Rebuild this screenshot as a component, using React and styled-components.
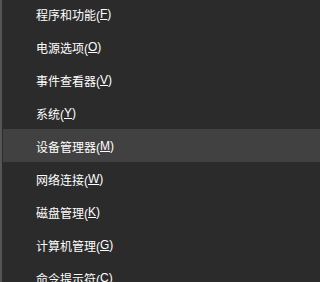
import React from 'react'
import styled, { createGlobalStyle } from 'styled-components'

const Global = createGlobalStyle`
  html, body {
    margin: 0;
    padding: 0;
    background: #2b2b2b;
  }
`

const Menu = styled.div`
  width: 100%;
  min-width: 201px;
  height: 282px;
  overflow: hidden;
  background: #2b2b2b;
  border-left: 2px solid #555555;
  box-sizing: border-box;
  padding-left: 1px;
`

const List = styled.ul`
  list-style: none;
  margin: -3px 0 0 0;
  padding: 0;
`

const Item = styled.li`
  height: 33px;
  display: flex;
  align-items: center;
  padding-left: 33px;
  padding-top: 1px;
  box-sizing: border-box;
  background: ${p => (p.$active ? '#414141' : 'transparent')};
  color: #ffffff;
  font-family: "Liberation Sans", "Noto Sans CJK SC", sans-serif;
  font-size: 12px;
  white-space: nowrap;

  u {
    text-decoration: underline;
    text-underline-offset: 1px;
  }
`

const items = [
  ['程序和功能', 'F'],
  ['电源选项', 'O'],
  ['事件查看器', 'V'],
  ['系统', 'Y'],
  ['设备管理器', 'M'],
  ['网络连接', 'W'],
  ['磁盘管理', 'K'],
  ['计算机管理', 'G'],
  ['命令提示符', 'C'],
]

export default () => {
  return (
    <Menu>
      <Global />
      <List>
        {items.map(([label, key], i) => (
          <Item key={key} $active={i === 4}>
            {label}(<u>{key}</u>)
          </Item>
        ))}
      </List>
    </Menu>
  )
}
